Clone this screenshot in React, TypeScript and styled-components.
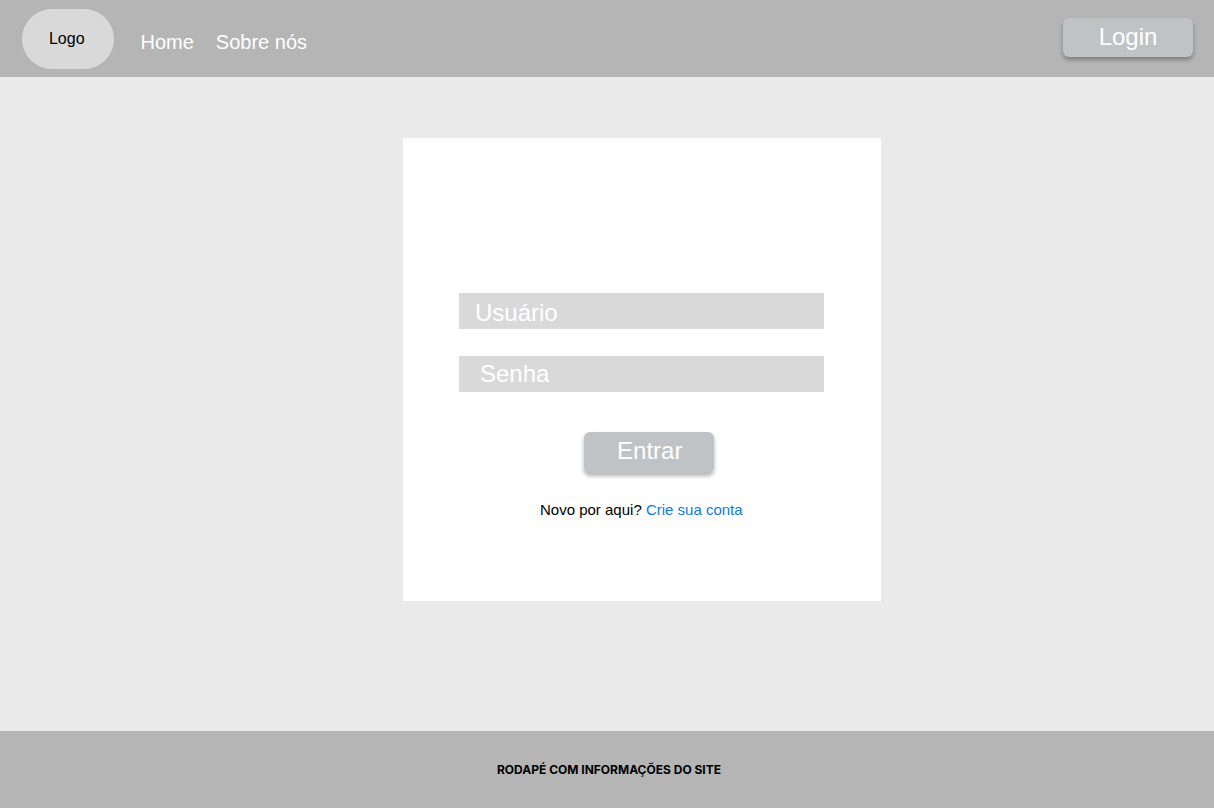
import React from "react";
import styled, { createGlobalStyle } from "styled-components";

const GlobalStyle = createGlobalStyle`
  * { box-sizing: border-box; }
  body { margin: 0; font-family: "Liberation Sans", Arial, sans-serif; }
`;

const Page = styled.div`
  display: flex;
  flex-direction: column;
  height: 808px;
  background: #eaeaea;
`;

const Header = styled.header`
  display: flex;
  align-items: flex-start;
  height: 77px;
  flex: none;
  padding: 0 21px 0 22px;
  background: #b5b5b5;
`;

const Logo = styled.div`
  width: 92px;
  height: 60px;
  margin-top: 9px;
  padding-right: 2.5px;
  border-radius: 30px;
  background: #d9d9d9;
  color: #000;
  font-size: 16px;
  line-height: 60px;
  text-align: center;
`;

const Nav = styled.nav`
  display: flex;
  gap: 22px;
  margin: 30px auto 0 26.5px;
`;

const NavLink = styled.a`
  color: #fff;
  font-size: 20px;
  line-height: 24px;
`;

const Button = styled.button<{ $height: number; $lift?: number; $shift?: number }>`
  display: block;
  width: 130px;
  height: ${(p) => p.$height}px;
  padding: 0 0 ${(p) => p.$lift ?? 0}px ${(p) => p.$shift ?? 0}px;
  border: 0;
  border-radius: 6px;
  background: #bfc3c6;
  box-shadow: 0 3px 4px rgba(0, 0, 0, 0.3);
  color: #fff;
  font: 24px "Liberation Sans", Arial, sans-serif;
`;

const HeaderAction = styled.div`
  margin-top: 18px;
`;

const Main = styled.main`
  flex: 1;
  display: flex;
  justify-content: center;
  align-items: flex-start;
  padding: 61px 0 0 70px;
`;

const Card = styled.form`
  display: flex;
  flex-direction: column;
  width: 478px;
  height: 463px;
  padding: 155px 57px 0 56px;
  background: #fff;
`;

const Field = styled.div<{ $indent: number; $drop?: number }>`
  height: 36px;
  margin-bottom: 27px;
  padding: ${(p) => p.$drop ?? 0}px 0 0 ${(p) => p.$indent}px;
  background: #d9d9d9;
  color: #fff;
  font-size: 24px;
  line-height: 36px;
`;

const Submit = styled.div`
  height: 40px;
  margin: 13px 0 0 125px;
`;

const Signup = styled.p`
  margin: 29px 0 0 81px;
  color: #000;
  font-size: 15px;
  line-height: 18px;
  white-space: nowrap;
`;

const SignupLink = styled.a`
  color: #0f7ae0;
`;

const Footer = styled.footer`
  display: flex;
  justify-content: center;
  flex: none;
  height: 77px;
  padding: 31px 0 0 4px;
  background: #b5b5b5;
  color: #000;
  font: 700 12px/16px Inter, sans-serif;
`;

export default function App() {
  return (
    <Page>
      <GlobalStyle />
      <Header>
        <Logo>Logo</Logo>
        <Nav>
          <NavLink>Home</NavLink>
          <NavLink>Sobre nós</NavLink>
        </Nav>
        <HeaderAction>
          <Button $height={39} $lift={2}>Login</Button>
        </HeaderAction>
      </Header>
      <Main>
        <Card>
          <Field $indent={16} $drop={2}>Usuário</Field>
          <Field $indent={21}>Senha</Field>
          <Submit>
            <Button type="button" $height={41} $lift={4} $shift={1.5}>Entrar</Button>
          </Submit>
          <Signup>
            Novo por aqui? <SignupLink>Crie sua conta</SignupLink>
          </Signup>
        </Card>
      </Main>
      <Footer>RODAPÉ COM INFORMAÇÕES DO SITE</Footer>
    </Page>
  );
}
